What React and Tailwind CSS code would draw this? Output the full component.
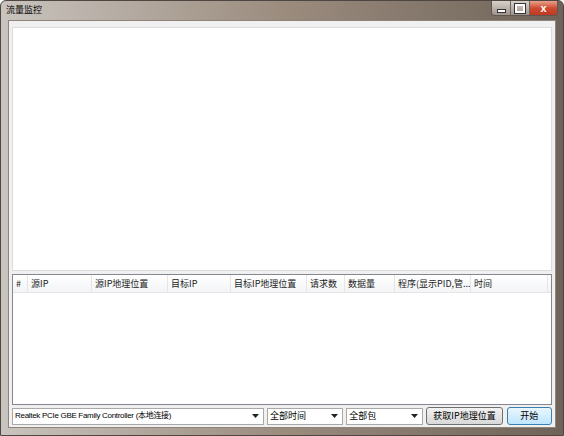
import React from 'react';

const cjk = { fontFamily: '"Noto Sans CJK SC", "DejaVu Sans", sans-serif' };
const ui = { fontFamily: '"Liberation Sans", "Noto Sans CJK SC", sans-serif' };

const columns = [
  { label: '#', w: 'w-[15px]' },
  { label: '源IP', w: 'w-[64px]' },
  { label: '源IP地理位置', w: 'w-[76px]' },
  { label: '目标IP', w: 'w-[63px]' },
  { label: '目标IP地理位置', w: 'w-[76px]' },
  { label: '请求数', w: 'w-[38px]' },
  { label: '数据量', w: 'w-[50px]' },
  { label: '程序(显示PID,管...', w: 'w-[76px]' },
  { label: '时间', w: 'w-[77px]' },
];

const Arrow = () => (
  <svg width="7" height="4" viewBox="0 0 7 4" className="shrink-0">
    <path d="M0 0h7L3.5 4z" fill="#222" />
  </svg>
);

const Combo = ({ text, w, latin }) => (
  <div className={`${w} h-[17px] flex items-center justify-between bg-white border border-[#a9a9a9] pl-[2px] pr-[4px]`}>
    <span
      className={`${latin ? 'text-[8px] tracking-[-0.3px]' : 'text-[9px]'} leading-[12px] text-black whitespace-nowrap`}
      style={latin ? ui : cjk}
    >
      {text}
    </span>
    <Arrow />
  </div>
);

export default function App() {
  return (
    <div className="w-[564px] h-[436px] flex flex-col rounded-t-[6px] border border-[#4e4640] bg-gradient-to-r from-[#c9c4bf] via-[#9b8c7e] to-[#6f6359] overflow-hidden">
      {/* title bar */}
      <div className="h-[19px] shrink-0 flex items-start justify-between pl-[5px]">
        <span className="mt-[3px] text-[9px] leading-[12px] text-black" style={cjk}>流量监控</span>
        <div className="flex mr-[5px] border border-t-0 border-[#5e5650] rounded-b-[4px] overflow-hidden h-[15px]">
          <div className="w-[19px] flex items-center justify-center bg-gradient-to-b from-[#d8d2cc] to-[#9f948a] border-r border-[#6e655e]">
            <div className="w-[7px] h-[2px] bg-white border border-[#333] mt-[5px] box-content" />
          </div>
          <div className="w-[19px] flex items-center justify-center bg-gradient-to-b from-[#d8d2cc] to-[#9f948a] border-r border-[#6e655e]">
            <div className="w-[6px] h-[5px] border-2 border-white outline outline-1 outline-[#333] box-content" />
          </div>
          <div className="w-[27px] flex items-center justify-center bg-gradient-to-b from-[#e8a08c] via-[#cf4a32] to-[#c03a22]">
            <span className="text-[11px] font-bold leading-none text-white" style={ui}>x</span>
          </div>
        </div>
      </div>

      {/* client area */}
      <div className="flex-1 flex flex-col mx-[7px] mb-[7px] bg-[#f0f0f0] border border-[#8e857c] pt-[6px] px-[3px]">
        <div className="h-[244px] bg-white border border-[#dcdcdc]" />

        <div className="mt-[3px] h-[131px] flex flex-col bg-white border border-[#828790]">
          <div className="h-[18px] flex items-stretch bg-gradient-to-b from-white to-[#f3f4f6] border-b border-[#e5e5e5]">
            {columns.map((c) => (
              <div key={c.label} className={`${c.w} flex items-center pl-[3px] border-r border-[#e5e5e5] overflow-hidden`}>
                <span className="text-[9px] leading-[12px] text-[#222] whitespace-nowrap" style={cjk}>{c.label}</span>
              </div>
            ))}
            <div className="flex-1" />
          </div>
        </div>

        <div className="mt-[2px] flex items-center gap-[3px]">
          <Combo text="Realtek PCIe GBE Family Controller (本地连接)" w="w-[255px]" latin />
          <Combo text="全部时间" w="w-[77px]" />
          <Combo text="全部包" w="w-[78px]" />
          <div className="w-[77px] h-[18px] flex items-center justify-center rounded-[3px] border border-[#707070] bg-gradient-to-b from-[#f2f2f2] to-[#d8d8d8]">
            <span className="text-[9px] leading-[12px] text-black" style={cjk}>获取IP地理位置</span>
          </div>
          <div className="w-[46px] h-[18px] ml-[1px] flex items-center justify-center rounded-[3px] border border-[#3c7fb1] bg-gradient-to-b from-[#eaf6fd] to-[#bee6fd]">
            <span className="text-[9px] leading-[12px] text-black" style={cjk}>开始</span>
          </div>
        </div>
      </div>
    </div>
  );
}
